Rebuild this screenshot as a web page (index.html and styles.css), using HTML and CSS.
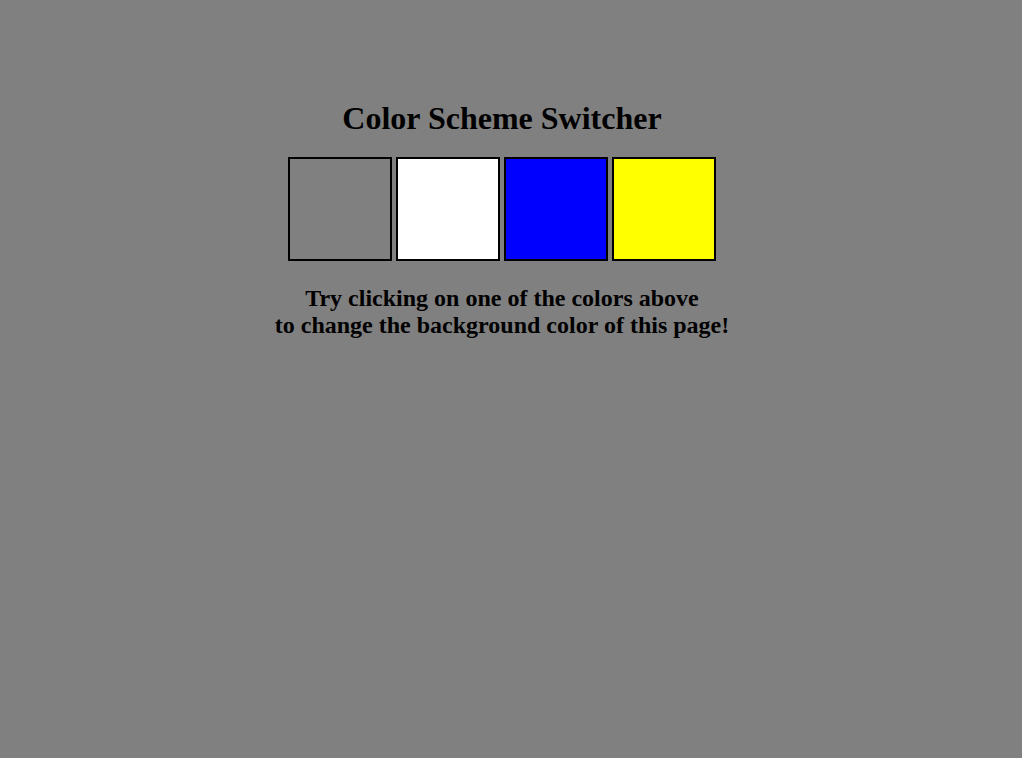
FILE: index.html
```html
<!DOCTYPE html>
<html>
<head>
<meta charset="utf-8">
<link rel="stylesheet" href="styles.css">
</head>
<body>
<div class="page">
  <h1 class="title">Color Scheme Switcher</h1>
  <div class="swatches">
    <div class="swatch swatch-gray"></div>
    <div class="swatch swatch-white"></div>
    <div class="swatch swatch-blue"></div>
    <div class="swatch swatch-yellow"></div>
  </div>
  <p class="hint">Try clicking on one of the colors above<br>to change the background color of this page!</p>
</div>
</body>
</html>
```
FILE: styles.css
```css
html, body {
  margin: 0;
  padding: 0;
  background: #808080;
}
.page {
  padding: 0 18px 0 0;
  text-align: center;
  font-family: "Liberation Serif", "Times New Roman", serif;
  color: #000;
}
.title {
  margin: 0;
  padding-top: 100px;
  font-size: 32px;
  font-weight: bold;
  line-height: 36px;
}
.swatches {
  display: flex;
  justify-content: center;
  gap: 4px;
  margin-top: 21px;
}
.swatch {
  width: 100px;
  height: 100px;
  border: 2px solid #000;
}
.swatch-gray { background: #808080; }
.swatch-white { background: #fff; }
.swatch-blue { background: #0000ff; }
.swatch-yellow { background: #ffff00; }
.hint {
  margin: 24px 0 0;
  font-size: 24px;
  font-weight: bold;
  line-height: 27px;
}
```
